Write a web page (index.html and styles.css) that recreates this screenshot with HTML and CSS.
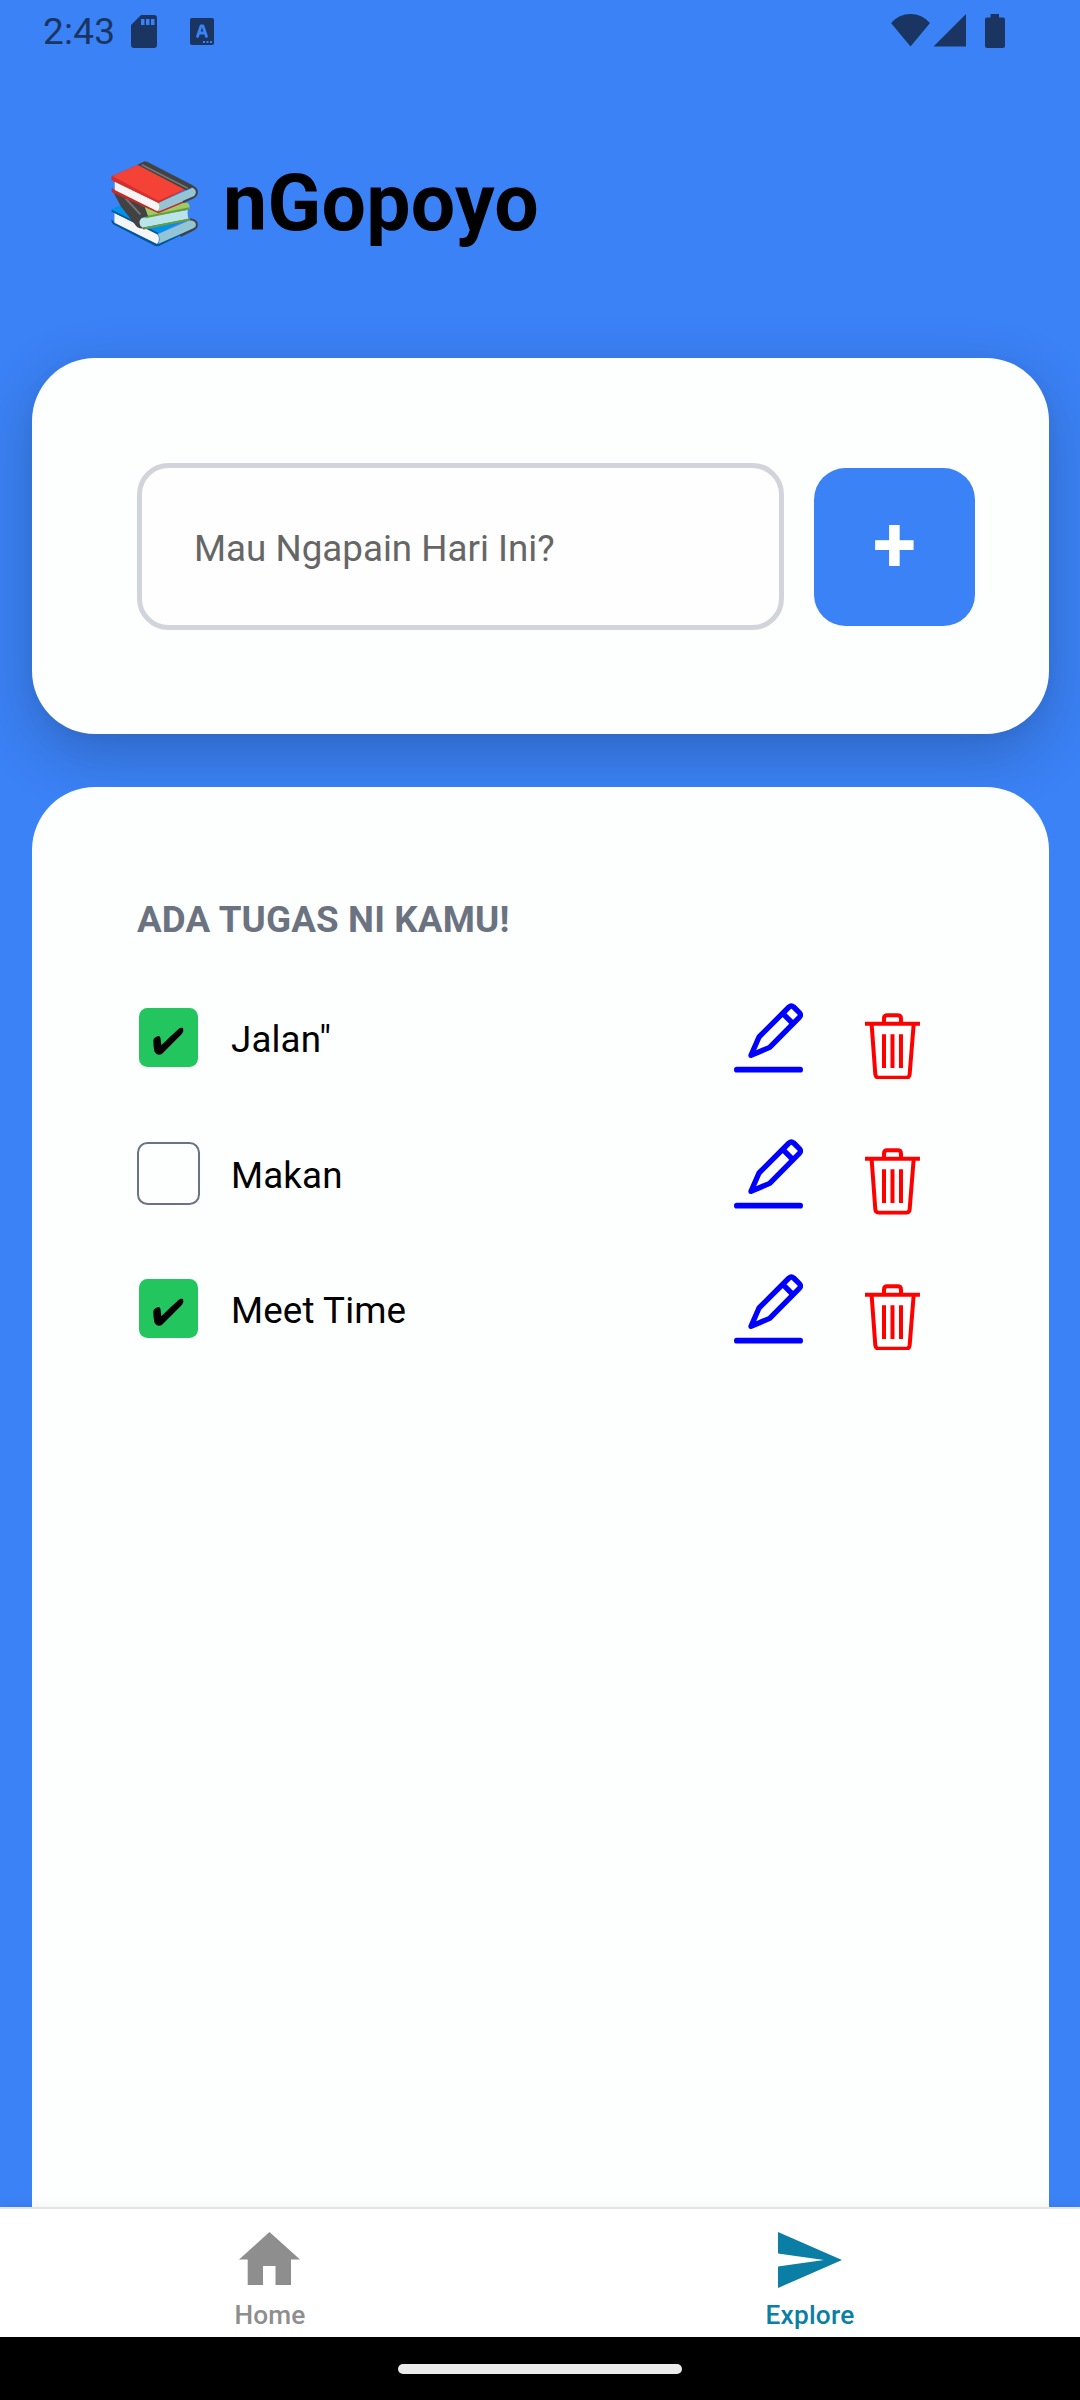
FILE: index.html
```html
<!DOCTYPE html>
<html lang="id">
<head>
<meta charset="utf-8">
<title>nGopoyo</title>
<link rel="stylesheet" href="styles.css">
</head>
<body>
<svg width="0" height="0" class="defs" aria-hidden="true">
  <symbol id="pencil" viewBox="72 70 207 210">
    <g fill="none" stroke="#00f" stroke-width="16" stroke-linecap="round" stroke-linejoin="round">
      <path d="M123 227 147 172 237 82Q244 76 251 82L268 99Q275 106 268 113L179 203Z"/>
      <path d="M219 102 247 130"/>
      <path d="M80.500 270H270.500" stroke-width="17"/>
    </g>
  </symbol>
  <symbol id="trash" viewBox="465 98 166 200">
    <g fill="none" stroke="#f00" stroke-width="12">
      <path d="M465 130H630"/>
      <path d="M522 127V115Q522 105 532 105H563Q573 105 573 115V127"/>
      <path d="M485 133 496 282Q497 292 507 292H589Q598 292 599 282L611 133"/>
      <path d="M522 162V263M547.500 162V263M573 162V263"/>
    </g>
  </symbol>
  <symbol id="check" viewBox="97 438 96 88">
    <path d="M98 480Q98 473 106 469L114 466Q119 466 120 472L123 494Q150 467 177 443Q184 438 190 441L191 450Q188 459 180 466L129 517Q124 524 115 524Q106 523 101 513Q98 498 98 480Z"/>
  </symbol>
</svg>

<div class="screen">
  <header class="status">
    <span class="clock">2:43</span>
    <svg class="sd" viewBox="0 0 26 33"><path fill-rule="evenodd" d="M10 0H23Q26 0 26 3V30Q26 33 23 33H3Q0 33 0 30V10ZM10 4V10H13.500V4ZM15 4V10H18.500V4ZM20 4V10H23.500V4Z"/></svg>
    <svg class="keyboard" viewBox="0 0 24 27"><rect width="24" height="27" rx="2"/><path class="cut" d="M7.500 18.500 11 8H13L16.500 18.500M9 15H15"/><path class="dots" d="M13 24H22"/></svg>
    <svg class="signals" viewBox="0 0 114 34"><path d="M0 9Q8 0 19.500 0T39 9L19.500 32.500ZM42.500 32.500 75 0V32.500ZM99.500 0H108V3.500H112Q114 3.500 114 5.500V32Q114 34 112 34H96Q94 34 94 32V5.500Q94 3.500 96 3.500H99.500Z"/></svg>
  </header>

  <h1 class="title">
    <svg class="books" viewBox="62 62 262 258" role="img" aria-label="Books">
      <path fill="#01579b" d="M63 237 72 246 200 309 309 262 318 262 206 317Q200 319 194 317L68 252Q62 248 63 237Z"/>
      <path fill="#f5f5f5" d="M72 218 200 281Q211 296 200 311L72 247Z"/>
      <path fill="#0091ea" d="M63 207 100 191 290 236 203 280 63 213Z"/>
      <path fill="none" stroke="#01579b" stroke-width="5" d="M64 211 203 280"/>
      <path fill="#94c5d5" d="M203 281 305 237Q321 239 318 257L310 264 203 311Q213 296 203 281Z"/>
      <path fill="none" stroke="#424242" stroke-width="6" d="M298 237Q322 239 319 257 317 265 306 269L270 287"/>
      <path fill="#9ccc65" d="M150 190 292 187 298 196 296 206 170 232Z"/>
      <path fill="#b9e4ea" d="M150 234 292 209Q290 222 294 236L153 262Q139 250 150 234Z"/>
      <path fill="none" stroke="#689f38" stroke-width="6" d="M165 231 297 204M158 265 299 237"/>
      <path fill="#424242" d="M70 158 98 163 163 200 173 228 158 231Q144 238 148 252 150 261 163 264 143 268 132 250L92 199Z"/>
      <path fill="none" stroke="#757575" stroke-width="6" d="M106 175 150 222"/>
      <path fill="#c62828" d="M64 144 72 147 202 211 282 180 283 186 204 219 67 157Q62 154 64 144Z"/>
      <path fill="#f5f5f5" d="M73 123 201 186Q213 198 201 213L73 149Z"/>
      <path fill="#94c5d5" d="M204 187 307 142Q321 147 317 163L309 170 203 214Q213 200 204 187Z"/>
      <path fill="#d32f2f" d="M63 108 141 74 287 147 204 188 63 120Z"/>
      <path fill="#f44336" d="M66 107 143 74 284 146 204 181Z"/>
      <path fill="#424242" d="M141 73 162 63 170 64 307 135 303 142 287 150Z"/>
      <path fill="none" stroke="#757575" stroke-width="5" d="M154 73 292 144"/>
      <path fill="none" stroke="#424242" stroke-width="6" d="M300 136Q322 142 319 159 317 169 305 173L278 185"/>
    </svg>
    <span>nGopoyo</span>
  </h1>

  <section class="card add">
    <input class="field" type="text" placeholder="Mau Ngapain Hari Ini?">
    <button class="plus"><span>+</span></button>
  </section>

  <section class="card tasks">
    <h2 class="heading">ADA TUGAS NI KAMU!</h2>
    <ul class="list">
      <li class="task">
        <span class="box done"><svg><use href="#check"/></svg></span>
        <span class="name">Jalan"</span>
        <svg class="edit"><use href="#pencil"/></svg>
        <svg class="remove"><use href="#trash"/></svg>
      </li>
      <li class="task">
        <span class="box"></span>
        <span class="name">Makan</span>
        <svg class="edit"><use href="#pencil"/></svg>
        <svg class="remove"><use href="#trash"/></svg>
      </li>
      <li class="task">
        <span class="box done"><svg><use href="#check"/></svg></span>
        <span class="name">Meet Time</span>
        <svg class="edit"><use href="#pencil"/></svg>
        <svg class="remove"><use href="#trash"/></svg>
      </li>
    </ul>
  </section>

  <nav class="tabs">
    <a class="tab">
      <svg class="home" viewBox="0 0 61 53"><path d="M30.500 0 61 27.500H52V53H36.500V34H24V53H8.700V27.500H0Z"/></svg>
      <span>Home</span>
    </a>
    <a class="tab active">
      <svg class="send" viewBox="0 0 64 56"><path d="M0 0 64 28 0 56V34.500L46 28 0 21.500Z"/></svg>
      <span>Explore</span>
    </a>
  </nav>
  <footer class="gesture"><span></span></footer>
</div>
</body>
</html>
```

FILE: styles.css
```css
* { box-sizing: border-box; }
body { margin: 0; font-family: Roboto, "Liberation Sans", sans-serif; color: #000; }
.defs { position: absolute; }
svg { display: block; flex: none; }

.screen {
  width: 1080px;
  height: 2400px;
  display: flex;
  flex-direction: column;
  background: #3b82f6;
  overflow: hidden;
}

.status {
  display: flex;
  align-items: flex-start;
  height: 62px;
  padding: 0 75px 0 43px;
  color: #1a3562;
  fill: #1a3562;
}
.clock { width: 88px; margin-top: 10px; font-size: 37px; line-height: 44px; letter-spacing: .2px; }
.sd { width: 26px; height: 33px; margin-top: 15px; }
.keyboard { width: 24px; height: 27px; margin: 18px 0 0 33px; }
.cut { fill: none; stroke: #3b82f6; stroke-width: 2.8; stroke-linecap: round; stroke-linejoin: round; }
.dots { fill: none; stroke: #3b82f6; stroke-width: 2; stroke-dasharray: 2 1.5; }
.signals { width: 114px; height: 34px; margin: 14px 0 0 auto; }

.title {
  display: flex;
  align-items: center;
  gap: 25px;
  height: 92px;
  margin: 95px 0 109px 110.500px;
  font-size: 78.75px;
  line-height: 92px;
  font-weight: 700;
  letter-spacing: .3px;
}
.books { width: 87.500px; height: 86px; margin-top: 2px; }

.card { margin: 0 31px 0 32px; background: #fdfefe; }
.add {
  flex: none;
  display: flex;
  align-items: center;
  gap: 30px;
  height: 376px;
  padding: 1px 74px 0 105px;
  border-radius: 63px;
  box-shadow: 0 20px 60px rgba(0, 0, 0, .22), 0 0 14px rgba(0, 0, 0, .03);
}
.field {
  flex: 1;
  min-width: 0;
  height: 167px;
  padding: 3px 52px 0;
  border: 5px solid #d1d5db;
  border-radius: 31.500px;
  background: #fefefe;
  font: 400 36.75px Roboto, "Liberation Sans", sans-serif;
}
.field::placeholder { color: #666; opacity: 1; }
.plus {
  width: 161px;
  height: 158px;
  padding: 0 0 3px;
  border: 0;
  border-radius: 31.500px;
  background: #3b82f6;
  color: #fff;
  font: 700 78.75px/92px Roboto, "Liberation Sans", sans-serif;
}

.tasks {
  flex: 1;
  margin-top: 53px;
  padding: 111px 105px 0;
  border-radius: 63px 63px 0 0;
  position: relative;
}
.heading {
  margin: 0;
  font-size: 36.75px;
  line-height: 44px;
  font-weight: 700;
  letter-spacing: .15px;
  color: #6b7280;
}
.list { margin: 59px 0 0; padding: 0; list-style: none; }
.task { display: flex; height: 135.500px; align-items: flex-start; }
.box {
  display: flex;
  align-items: center;
  justify-content: center;
  width: 63px;
  height: 63px;
  margin-top: 5px;
  border: 2.500px solid #6b7280;
  border-radius: 10.500px;
}
.done { background: #22c55e; background-clip: padding-box; border-color: transparent; }
.done svg { width: 31px; height: 28.500px; margin-top: 7px; }
.name {
  flex: 1;
  margin: 17px 0 0 31px;
  font-size: 36.75px;
  line-height: 43px;
  letter-spacing: .12px;
}
.edit { width: 69px; height: 70px; margin-top: 2.300px; }
.remove { width: 55.300px; height: 66.700px; margin: 11.700px 23.700px 0 62px; }

.tabs {
  flex: none;
  display: flex;
  height: 130px;
  border-top: 2px solid #e4e5e5;
  background: #fff;
  position: relative;
  box-shadow: 0 0 12px rgba(0, 0, 0, .05);
}
.tab {
  flex: 1;
  display: flex;
  flex-direction: column;
  align-items: center;
  padding-top: 23px;
  color: #8e8e8f;
  fill: #8e8e8f;
  font-size: 26.25px;
  line-height: 32px;
  font-weight: 500;
  letter-spacing: .2px;
}
.tab span { margin-top: auto; margin-bottom: 6px; }
.active { color: #0a7ea4; fill: #0a7ea4; }
.home { width: 61px; height: 53px; margin-right: 2px; }
.send { width: 64px; height: 56px; }

.gesture { flex: none; height: 63px; padding: 27px 0 0 398px; background: #000; }
.gesture span { display: block; width: 284px; height: 10px; border-radius: 5px; background: #ebebeb; }
```
